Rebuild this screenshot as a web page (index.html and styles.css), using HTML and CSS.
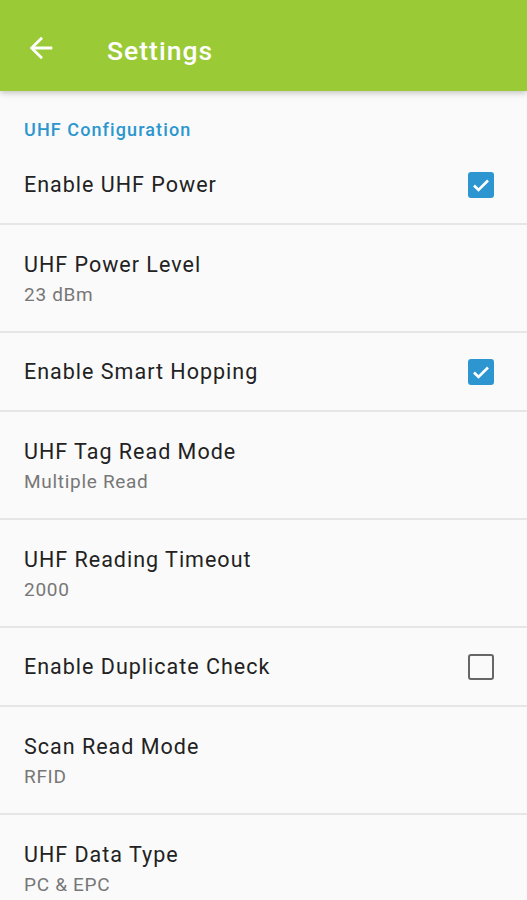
FILE: index.html
```html
<!DOCTYPE html>
<html>
<head>
<meta charset="utf-8">
<link rel="stylesheet" href="styles.css">
</head>
<body>
<header class="appbar">
  <svg class="back" width="34" height="34" viewBox="0 0 24 24"><path d="M20 11H7.83l5.59-5.59L12 4l-8 8 8 8 1.41-1.41L7.83 13H20v-2z" fill="#fff"/></svg>
  <h1 class="title">Settings</h1>
</header>
<main class="list">
  <div class="category">UHF Configuration</div>
  <div class="row single">
    <div class="text"><div class="pt">Enable UHF Power</div></div>
    <span class="cb checked"><svg viewBox="0 0 24 24" width="24" height="24"><path d="M5 12.5l4.5 4.5L19 7.5" stroke="#fff" stroke-width="2.6" fill="none"/></svg></span>
  </div>
  <div class="row double">
    <div class="text"><div class="pt">UHF Power Level</div><div class="ps">23 dBm</div></div>
  </div>
  <div class="row single">
    <div class="text"><div class="pt">Enable Smart Hopping</div></div>
    <span class="cb checked"><svg viewBox="0 0 24 24" width="24" height="24"><path d="M5 12.5l4.5 4.5L19 7.5" stroke="#fff" stroke-width="2.6" fill="none"/></svg></span>
  </div>
  <div class="row double">
    <div class="text"><div class="pt">UHF Tag Read Mode</div><div class="ps">Multiple Read</div></div>
  </div>
  <div class="row double">
    <div class="text"><div class="pt">UHF Reading Timeout</div><div class="ps">2000</div></div>
  </div>
  <div class="row single">
    <div class="text"><div class="pt">Enable Duplicate Check</div></div>
    <span class="cb"></span>
  </div>
  <div class="row double">
    <div class="text"><div class="pt">Scan Read Mode</div><div class="ps">RFID</div></div>
  </div>
  <div class="row double">
    <div class="text"><div class="pt">UHF Data Type</div><div class="ps">PC &amp; EPC</div></div>
  </div>
</main>
</body>
</html>
```
FILE: styles.css
```css
html, body {
  margin: 0;
  padding: 0;
  background: #fafafa;
  font-family: Roboto, "Noto Sans", sans-serif;
  overflow: hidden;
}
.appbar {
  height: 91px;
  box-sizing: border-box;
  padding: 10px 0 0 24px;
  background: #9aca35;
  display: flex;
  align-items: center;
  box-shadow: 0 2px 6px rgba(0,0,0,0.22);
  position: relative;
  z-index: 1;
}
.back {
  display: block;
  margin-top: -6px;
}
.title {
  margin: 0 0 0 49px;
  color: #fff;
  font-size: 26.5px;
  font-weight: 500;
  letter-spacing: 1px;
}
.list {
  display: flex;
  flex-direction: column;
}
.category {
  height: 55px;
  box-sizing: border-box;
  padding: 27px 0 0 24px;
  color: #2c96cf;
  font-size: 18px;
  font-weight: 500;
  line-height: 24px;
  letter-spacing: 1.1px;
}
.row {
  display: flex;
  align-items: center;
  box-sizing: border-box;
  padding: 0 33px 0 24px;
  border-bottom: 2px solid #e6e6e6;
}
.row.single { height: 79px; }
.row.double { height: 108px; padding-top: 3px; }
.text { flex: 1; }
.pt {
  font-size: 21.5px;
  line-height: 28px;
  color: #222;
  letter-spacing: 1px;
}
.ps {
  font-size: 19px;
  line-height: 28px;
  margin-top: 2px;
  color: #777;
  letter-spacing: 0.7px;
}
.cb {
  width: 26px;
  height: 26px;
  box-sizing: border-box;
  border: 2.5px solid #666;
  border-radius: 3px;
  display: flex;
  align-items: center;
  justify-content: center;
}
.cb.checked {
  background: #2d96d0;
  border: none;
}
```
